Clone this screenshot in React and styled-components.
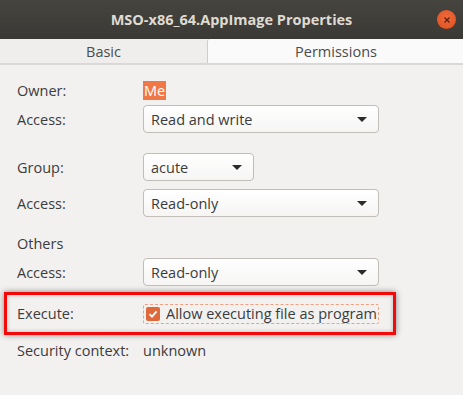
import styled, { createGlobalStyle } from "styled-components";

const Global = createGlobalStyle`
  html, body {
    margin: 0;
    padding: 0;
    background: #f2f1f0;
  }
  body {
    font-family: "Open Sans", "DejaVu Sans", sans-serif;
    color: #3c3c3c;
  }
`;

const Window = styled.div`
  width: 463px;
  height: 395px;
  background: #f2f1f0;
  display: flex;
  flex-direction: column;
  overflow: hidden;
`;

const TitleBar = styled.div`
  height: 39px;
  background: linear-gradient(#45443f, #3a3935);
  display: flex;
  align-items: center;
  justify-content: center;
  position: relative;
  color: #dfdbd2;
  font-weight: 700;
  font-size: 14.5px;
`;

const CloseButton = styled.div`
  position: absolute;
  right: 7px;
  top: 10px;
  width: 19px;
  height: 19px;
  border-radius: 50%;
  background: radial-gradient(circle at 50% 40%, #f06b3d, #de4c1c);
  display: flex;
  align-items: center;
  justify-content: center;
`;

const Tabs = styled.div`
  display: flex;
  height: 24px;
  border-bottom: 2px solid #dad8d5;
  background: #efeeed;
`;

const Tab = styled.div`
  flex: ${(p) => (p.$active ? "0 0 256px" : "0 0 207px")};
  display: flex;
  align-items: center;
  justify-content: center;
  font-size: 14.5px;
  color: #4c4c4c;
  background: ${(p) => (p.$active ? "#fafafa" : "#efeeed")};
  border-left: ${(p) => (p.$active ? "1px solid #cfcdca" : "none")};
  border-top-left-radius: ${(p) => (p.$active ? "3px" : "0")};
`;

const Body = styled.div`
  padding: 0 0 0 17px;
  display: flex;
  flex-direction: column;
`;

const Row = styled.div`
  display: grid;
  grid-template-columns: 126px auto;
  align-items: center;
  height: ${(p) => p.$h || 28}px;
  margin-top: ${(p) => p.$mt || 0}px;
  font-size: 14.5px;
`;

const Label = styled.span`
  white-space: nowrap;
`;

const Highlight = styled.span`
  background: #f07746;
  color: #ffffff;
  padding: 0 1px;
  justify-self: start;
`;

const Select = styled.div`
  width: ${(p) => p.$w || 236}px;
  height: 28px;
  box-sizing: border-box;
  border: 1px solid #c1bdb8;
  border-radius: 4px;
  background: linear-gradient(#ffffff, #f6f5f4);
  display: flex;
  align-items: center;
  justify-content: space-between;
  padding: 0 11px 0 7px;
  font-size: 14.5px;
  color: #3c3c3c;
`;

const Arrow = styled.span`
  width: 0;
  height: 0;
  border-left: 5px solid transparent;
  border-right: 5px solid transparent;
  border-top: 5px solid #2b2b2b;
`;

const ExecuteBox = styled.div`
  margin: 6px 0 0 -13px;
  width: 392px;
  height: 43px;
  box-sizing: border-box;
  border: 3px solid #f20a0a;
  box-shadow: 0 0 6px rgba(0, 0, 0, 0.45), inset 0 0 4px rgba(0, 0, 0, 0.25);
  display: grid;
  grid-template-columns: 126px auto;
  align-items: center;
  padding-left: 10px;
  font-size: 14.5px;
`;

const CheckLine = styled.label`
  display: flex;
  align-items: center;
  gap: 6px;
  width: 236px;
  height: 20px;
  box-sizing: border-box;
  border: 1px dashed #f0a080;
  border-radius: 2px;
  padding-left: 2px;
  white-space: nowrap;
`;

const CheckBox = styled.span`
  width: 14px;
  height: 14px;
  border-radius: 2px;
  background: #e0693c;
  display: flex;
  align-items: center;
  justify-content: center;
`;

const App = () => {
  return (
    <Window>
      <Global />
      <TitleBar>
        MSO-x86_64.AppImage Properties
        <CloseButton>
          <svg width="8" height="8" viewBox="0 0 8 8">
            <path d="M1.5 1.5L6.5 6.5M6.5 1.5L1.5 6.5" stroke="#5a2010" strokeWidth="1.3" />
          </svg>
        </CloseButton>
      </TitleBar>
      <Tabs>
        <Tab>Basic</Tab>
        <Tab $active>Permissions</Tab>
      </Tabs>
      <Body>
        <Row $mt={10} $h={30}>
          <Label>Owner:</Label>
          <Highlight>Me</Highlight>
        </Row>
        <Row>
          <Label>Access:</Label>
          <Select>
            Read and write
            <Arrow />
          </Select>
        </Row>
        <Row $mt={20}>
          <Label>Group:</Label>
          <Select $w={111}>
            acute
            <Arrow />
          </Select>
        </Row>
        <Row $mt={8}>
          <Label>Access:</Label>
          <Select>
            Read-only
            <Arrow />
          </Select>
        </Row>
        <Row $mt={13} $h={26}>
          <Label>Others</Label>
        </Row>
        <Row $mt={2}>
          <Label>Access:</Label>
          <Select>
            Read-only
            <Arrow />
          </Select>
        </Row>
        <ExecuteBox>
          <Label>Execute:</Label>
          <CheckLine>
            <CheckBox>
              <svg width="10" height="10" viewBox="0 0 10 10">
                <path d="M1.5 5.2L4 7.6L8.6 2.4" fill="none" stroke="#ffffff" strokeWidth="1.8" />
              </svg>
            </CheckBox>
            Allow executing file as program
          </CheckLine>
        </ExecuteBox>
        <Row $mt={1} $h={28}>
          <Label>Security context:</Label>
          <span>unknown</span>
        </Row>
      </Body>
    </Window>
  );
};

export default App;
